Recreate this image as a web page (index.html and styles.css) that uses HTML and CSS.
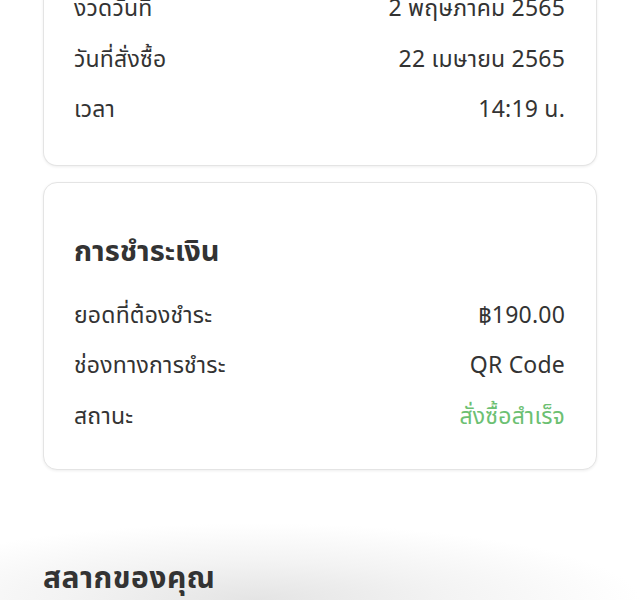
FILE: index.html
```html
<!DOCTYPE html>
<html lang="th">
<head>
<meta charset="UTF-8">
<title>รายละเอียดคำสั่งซื้อ</title>
<link rel="stylesheet" href="styles.css">
</head>
<body>
<div class="page">
	<div class="card card-top">
		<ul class="rows">
			<li><span>งวดวันที่</span><span>2 พฤษภาคม 2565</span></li>
			<li><span>วันที่สั่งซื้อ</span><span>22 เมษายน 2565</span></li>
			<li><span>เวลา</span><span>14:19 น.</span></li>
		</ul>
	</div>

	<div class="card">
		<h2 class="card-title">การชำระเงิน</h2>
		<ul class="rows">
			<li><span>ยอดที่ต้องชำระ</span><span>฿190.00</span></li>
			<li><span>ช่องทางการชำระ</span><span>QR Code</span></li>
			<li><span>สถานะ</span><span class="status-ok">สั่งซื้อสำเร็จ</span></li>
		</ul>
	</div>

	<div class="tickets">
		<h2 class="section-title">สลากของคุณ</h2>
	</div>
</div>
</body>
</html>
```

FILE: styles.css
```css
html, body {
	margin: 0;
	padding: 0;
	background: #fff;
}

body {
	font-family: "Noto Sans Thai", "Noto Sans", "DejaVu Sans", sans-serif;
	color: #333;
	overflow: hidden;
}

.page {
	height: 600px;
	display: flex;
	flex-direction: column;
	gap: 16px;
}

.card {
	margin: 0 43px;
	padding: 49px 31px 27px 30px;
	border: 1px solid #e4e4e4;
	border-radius: 14px;
	box-shadow: 0 1px 3px rgba(0, 0, 0, 0.07);
	background: #fff;
}

.card-top {
	margin-top: -16px;
	padding-top: 0;
	padding-bottom: 29px;
	border-top: none;
	border-radius: 0 0 14px 14px;
}

.card-title {
	margin: 0 0 19px;
	font-size: 29px;
	font-weight: bold;
	line-height: 40px;
}

.rows {
	margin: 0;
	padding: 0;
	list-style: none;
	font-size: 23px;
	letter-spacing: 0.2px;
}

.rows li {
	display: flex;
	justify-content: space-between;
	align-items: center;
	height: 50.5px;
}

.status-ok {
	color: #6cc072;
}

.tickets {
	flex: 1;
	margin-top: 18px;
	padding: 55px 43px 0;
	background: radial-gradient(ellipse 75% 100% at 40% 100%, #e4e4e4 0%, #f3f3f3 40%, #fff 80%);
}

.section-title {
	margin: 0;
	font-size: 30px;
	font-weight: bold;
	line-height: 40px;
	letter-spacing: 0.5px;
}
```
